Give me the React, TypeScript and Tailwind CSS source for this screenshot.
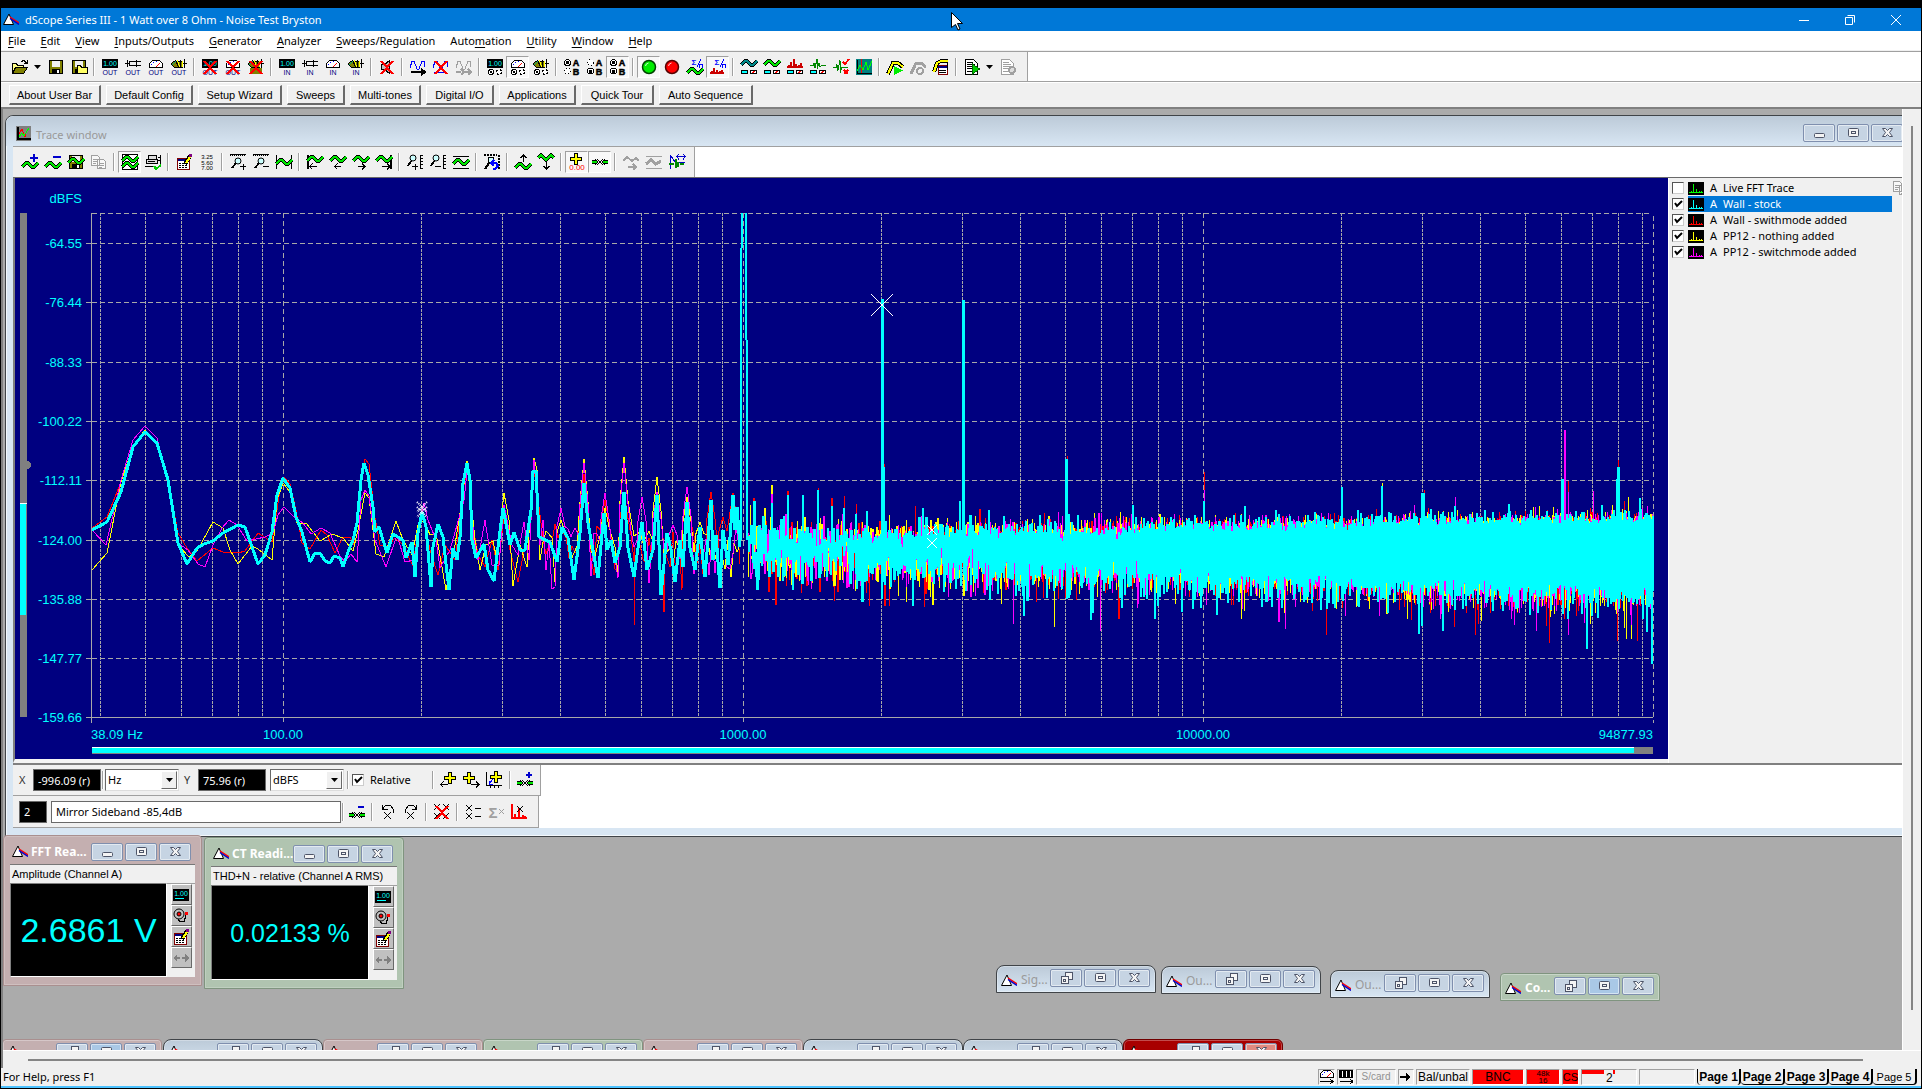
import { useMemo } from "react";
import type { ReactNode } from "react";
import clsx from "clsx";

/* ---------- icons ---------- */

const Svg = ({ children }: { children: ReactNode }) => (
  <svg viewBox="0 0 16 16" className="size-4 shrink-0 overflow-visible" shapeRendering="crispEdges" fill="none" aria-hidden="true">
    {children}
  </svg>
);

const Tiny = ({ x = 8, y, size = 7, fill, children }: { x?: number; y: number; size?: number; fill: string; children: string }) => (
  <text x={x} y={y} fontSize={size} fill={fill} textAnchor="middle" fontFamily="'Liberation Sans', Arial, sans-serif">
    {children}
  </text>
);

const Wave = ({ y = 0, c = "#00e400" }: { y?: number; c?: string }) => {
  const d = `M0 ${y + 10}L4 ${y + 6}L6 ${y + 6}L10 ${y + 10}L12 ${y + 10}L16 ${y + 6}`;
  return (
    <>
      <path d={d} stroke="#000" strokeWidth={3.5} />
      <path d={d} stroke={c} strokeWidth={2} />
    </>
  );
};

const Lcd = () => (
  <>
    <rect width="16" height="9" fill="#000" />
    <Tiny y={7} fill="#0ff">1.00</Tiny>
  </>
);
const Plug = () => <path d="M0 4.500h4M2.500 1v7M4.500 2v5M4.500 2.500h7M4.500 6.500h7M11.500 1v7M12 2.500h4M12 6.500h4" stroke="#000" />;
const Gauge = () => (
  <>
    <path d="M1.500 8.500v-4l3-3h7l3 3v4z" fill="#fff" stroke="#000" />
    <path d="M3 5.500h1M5 3.500h1M8 2.500h1" stroke="#00f" />
    <path d="M8 8l4-4" stroke="#f00" />
  </>
);
const Speaker = () => (
  <>
    <path d="M0 5l3-3h8v6H3z" fill="#808000" stroke="#000" />
    <path d="M4.500 1l3 7M9.500 1v8M13.500 0v9M11 4.500h5" stroke="#000" />
    <path d="M6.500 1l2 7M11.500 2v6" stroke="#ff0" />
    <path d="M1 6l4-4" stroke="#0a7" />
  </>
);
const Cross = () => <path d="M2 2L14 15M14 2L2 15" stroke="#f00" strokeWidth="2" />;
const OutMark = () => <Tiny y={16} fill="#000080">OUT</Tiny>;
const InMark = () => <Tiny y={16} fill="#000080">IN</Tiny>;
const Radios = () => (
  <>
    <circle cx="4" cy="13" r="2.500" fill="#fff" stroke="#000" />
    <rect x="3" y="12" width="2" height="2" fill="#000" />
    <circle cx="12" cy="13" r="2.500" fill="#fff" stroke="#000" strokeDasharray="2 2" />
  </>
);
const Floppy = () => (
  <>
    <rect x="1.500" y="1.500" width="13" height="13" fill="#808000" stroke="#000" />
    <rect x="4" y="2" width="8" height="6" fill="#f0f0f0" />
    <rect x="4" y="10" width="8" height="5" fill="#000" />
    <rect x="9" y="11" width="2" height="3" fill="#fff" />
  </>
);
const Lens = ({ sign }: { sign: string }) => (
  <>
    <path d="M0 1.500h16" stroke="#000" strokeDasharray="1 1" />
    <path d="M0 0.500h16" stroke="#000" />
    <circle cx="8" cy="7" r="3" fill="#cff" stroke="#000" shapeRendering="auto" />
    <path d="M6 9l-4 5" stroke="#000" strokeWidth="2" />
    <path d={sign} stroke="#000" />
  </>
);
const LensY = ({ sign }: { sign: string }) => (
  <>
    <circle cx="6" cy="4" r="3" fill="#cff" stroke="#000" shapeRendering="auto" />
    <path d="M4 7l-3 5" stroke="#000" strokeWidth="2" />
    <path d="M13.500 1v14M13 1.500h3M13 4.500h3M13 7.500h3M13 10.500h3M13 14.500h3" stroke="#000" />
    <path d={sign} stroke="#000" />
  </>
);
const AB = ({ a, b }: { a: boolean; b: boolean }) => (
  <>
    <circle cx="3.500" cy="3.500" r="3" fill="#fff" stroke="#000" strokeDasharray={a ? undefined : "1 2"} />
    <circle cx="3.500" cy="12" r="3" fill="#fff" stroke="#000" strokeDasharray={b ? undefined : "1 2"} />
    {a && <rect x="2" y="2" width="3" height="3" fill="#000" />}
    {b && <rect x="2" y="11" width="3" height="3" fill="#000" />}
    <g fontWeight="bold" stroke="#000" strokeWidth="0.500">
      <Tiny x={12} y={7} size={9} fill="#000">A</Tiny>
      <Tiny x={12} y={16} size={9} fill="#000">B</Tiny>
    </g>
  </>
);
const Bars = ({ c }: { c: string }) => (
  <path d="M0 8h16M2 8V6M4 8V3M7 8V0M9 8V5M12 8V6M14 8V4" stroke={c} strokeWidth="2" />
);
const Meters = () => (
  <>
    <rect x="0.500" y="11.500" width="6" height="3" fill="#0ff" stroke="#000" />
    <rect x="9.500" y="11.500" width="6" height="3" fill="#fff" stroke="#000" />
    <path d="M11 14l3-2" stroke="#f00" />
  </>
);
const Sum = () => (
  <>
    <g fontWeight="bold"><Tiny x={7} y={6} size={8} fill="#00f">Σ</Tiny></g>
    <path d="M14 0l-4 8M12.500 5v4M12 5.500h3M15.500 5v4" stroke="#00f" />
  </>
);
const Pencil = () => (
  <>
    <path d="M9 10l5-8" stroke="#000" strokeWidth="4" />
    <path d="M10 9l4-6" stroke="#ff0" strokeWidth="2" />
    <rect x="13" y="0" width="3" height="3" fill="#800080" />
  </>
);
const Sheet = () => (
  <>
    <rect x="1" y="4" width="12" height="11" fill="#fff" stroke="#800000" />
    <rect x="2" y="5" width="10" height="2" fill="#000080" />
    <path d="M3 9.500h9M3 11.500h9M3 13.500h9" stroke="#000" strokeDasharray="2 1" />
    <Pencil />
  </>
);
const Plus = ({ x = 8, y = 8 }: { x?: number; y?: number }) => (
  <>
    <path d={`M${x} ${y - 6}v12M${x - 6} ${y}h12`} stroke="#000" strokeWidth="4" />
    <path d={`M${x} ${y - 5}v10M${x - 5} ${y}h10`} stroke="#ff0" strokeWidth="2" />
  </>
);
const Ecks = ({ x = 0, y = 0, c = "#000", s = 6 }: { x?: number; y?: number; c?: string; s?: number }) => (
  <path d={`M${x} ${y}l${s} ${s}M${x + s} ${y}l${-s} ${s}`} stroke={c} shapeRendering="auto" />
);
const Marks = () => (
  <>
    <path d="M0 11h5M11 11h5" stroke="#000" strokeWidth="4" />
    <path d="M0 11h5M11 11h5" stroke="#00e400" strokeWidth="2" />
    <path d="M3 8l3 3-3 3M13 8l-3 3 3 3" stroke="#000" />
    <Ecks x={5} y={8} />
  </>
);
const Page = ({ c = "#000" }: { c?: string }) => (
  <>
    <path d="M1.500 0.500h8l4 4v11h-12z" fill="#fff" stroke={c} />
    <path d="M3 3.500h6M3 5.500h8M3 7.500h8M3 9.500h8M3 12.500h6" stroke={c} />
  </>
);

const icons: Record<string, ReactNode> = {
  open: (
    <>
      <path d="M0.500 14V4.500h4l1 2h6v2" fill="#ff8" stroke="#000" />
      <path d="M0.500 14.500l3-6h12l-4 6z" fill="#808000" stroke="#000" />
      <path d="M9 2.500l3-1 3 3M15 1v3h-3" stroke="#000" />
    </>
  ),
  save: <Floppy />,
  saveAs: (
    <>
      <Floppy />
      <path d="M6.500 14.500v-8h3l1 2h6v6z" fill="#ff6" stroke="#000" />
    </>
  ),
  lcdOut: <><Lcd /><OutMark /></>,
  plugOut: <><Plug /><OutMark /></>,
  gaugeOut: <><Gauge /><OutMark /></>,
  speakerOut: <><Speaker /><OutMark /></>,
  lcdOff: <><Lcd /><OutMark /><Cross /></>,
  gaugeOff: <><Gauge /><OutMark /><Cross /></>,
  speakerOff: <><Speaker /><path d="M2 12h12" stroke="#808000" strokeWidth="6" /><Cross /></>,
  lcdIn: <><Lcd /><InMark /></>,
  plugIn: <><Plug /><InMark /></>,
  gaugeIn: <><Gauge /><InMark /></>,
  speakerIn: <><Speaker /><InMark /></>,
  mute: (
    <>
      <path d="M2.500 5.500h3l5-4v13l-5-4h-3z" fill="#c0c0c0" stroke="#000" />
      <Cross />
    </>
  ),
  genRun: (
    <>
      <path d="M0 9l2-7h2l3 8h2l3-8h2l1 6" stroke="#00f" />
      <path d="M1 13h12M11 10l4 3-4 3" stroke="#000" strokeWidth="2" />
    </>
  ),
  genOff: (
    <>
      <path d="M0 9l2-7h2l3 8h2l3-8h2l1 6M1 13h13" stroke="#00f" />
      <Cross />
    </>
  ),
  genNext: (
    <>
      <path d="M0 9l2-7h2l3 8h2l3-8h2l1 6" stroke="#a0a0a0" />
      <path d="M0 13h5M5 10l3 3-3 3M8 13h5M12 10l3 3-3 3" stroke="#a0a0a0" strokeWidth="2" />
    </>
  ),
  lcdCh: <><Lcd /><Radios /></>,
  gaugeCh: <><Gauge /><Radios /></>,
  speakerCh: <><Speaker /><Radios /></>,
  chA: <AB a b={false} />,
  chB: <AB a={false} b />,
  chAB: <AB a b />,
  go: (
    <g shapeRendering="auto">
      <circle cx="8" cy="8" r="6.500" fill="#0e0" stroke="#040" strokeWidth="1.500" />
      <path d="M4.500 7a3.500 3.500 0 0 1 3-3" stroke="#cfc" />
    </g>
  ),
  stop: (
    <g shapeRendering="auto">
      <circle cx="8" cy="8" r="6.500" fill="#f00" stroke="#500" strokeWidth="1.500" />
      <path d="M4.500 7a3.500 3.500 0 0 1 3-3" stroke="#fcc" />
    </g>
  ),
  sumWave: <><Sum /><Wave y={4} /></>,
  sumFft: <><Sum /><path d="M0 14h14M2 14v-2M4 14v-5M7 14v-3M10 14v-2M12 14v-3" stroke="#c00" strokeWidth="2" /></>,
  scopeA: <><Wave y={-4} c="#088" /><Meters /></>,
  scopeB: <><Wave y={-4} /><Meters /></>,
  fftBars: <><Bars c="#c00" /><Meters /></>,
  impulse: <><path d="M0 6.500h3l1-2 1 4 2-8v9l2-5 1 3 2-1h4" stroke="#080" /><Meters /></>,
  limits: (
    <>
      <path d="M0 8.500h3l1-3 1 6 2-10v12l2-5h6" stroke="#080" />
      <path d="M10 3l2 2 4-5M11 11l4 4M15 11l-4 4" stroke="#f00" strokeWidth="2" />
    </>
  ),
  scope: (
    <>
      <rect width="16" height="16" fill="#008080" />
      <path d="M1.500 1v13h14" stroke="#000" />
      <path d="M5.500 0v14" stroke="#f00" />
      <path d="M1 12l3-6 3 5 3-8 2 8 4-9" stroke="#0f0" />
    </>
  ),
  sweep: (
    <>
      <path d="M1 15L6 4h5l5 4" stroke="#000" strokeWidth="4" />
      <path d="M1 15L6 4h5l5 4" stroke="#ff0" strokeWidth="2" />
      <path d="M7 7l9 4.500-9 4.500z" fill="#0e0" />
    </>
  ),
  sweepOff: (
    <>
      <path d="M1 15L6 4h5l5 4" stroke="#a0a0a0" strokeWidth="3" />
      <circle cx="10" cy="12" r="3" stroke="#a0a0a0" strokeWidth="2" />
    </>
  ),
  sweepEdit: (
    <>
      <path d="M1 13L4 4l4-2h7" stroke="#000" strokeWidth="4" />
      <path d="M1 13L4 4l4-2h7" stroke="#ff0" strokeWidth="2" />
      <rect x="5" y="6" width="9" height="9" fill="#fff" stroke="#800000" />
      <path d="M5 8h9" stroke="#000080" strokeWidth="2" />
      <path d="M6 11.500h7M6 13.500h7M14.500 3v8" stroke="#000" />
    </>
  ),
  script: <><Page /><path d="M8.500 5l7 5-7 5z" fill="#0c0" stroke="#060" /></>,
  scriptOff: <><Page c="#a0a0a0" /><circle cx="12" cy="11" r="3" fill="#ddd" stroke="#a0a0a0" strokeWidth="2" /></>,
  addTrace: <><Wave y={3} /><path d="M12 0v8M8 4h8" stroke="#00c" strokeWidth="2" /></>,
  delTrace: <><Wave y={3} /><path d="M8 3h8" stroke="#00c" strokeWidth="2" /></>,
  saveTrace: <><Floppy /><Wave y={-1} /></>,
  copy: (
    <g stroke="#a0a0a0" fill="#f8f8f8">
      <path d="M0.500 1.500h6l2 2v8h-8zM6.500 5.500h6l2 2v7h-8z" />
      <path d="M2 5.500h4M2 7.500h4M2 9.500h3M8 9.500h5M8 11.500h5M8 13.500h3" />
    </g>
  ),
  view: <><rect x="0.500" y="0.500" width="15" height="15" fill="#fff" stroke="#000" /><Wave y={-3} /><Wave y={3} /></>,
  print: (
    <>
      <path d="M3.500 1.500h8v4h-8zM1.500 5.500h11v4h-11z" fill="#ddd" stroke="#000" />
      <path d="M0 12.500h9M15.500 1v10M3 7.500h7M13 3.500h3M13 6.500h3" stroke="#000" />
      <path d="M9 12l2 3 5-4" stroke="#0c0" strokeWidth="2" />
    </>
  ),
  sheet: <Sheet />,
  values: (
    <>
      <Tiny y={5} size={6} fill="#000">3.25</Tiny>
      <Tiny y={11} size={6} fill="#000">5.60</Tiny>
      <Tiny y={16} size={6} fill="#000">7.00</Tiny>
    </>
  ),
  zoomInX: <Lens sign="M10 12.500h6M13.500 10v6" />,
  zoomOutX: <Lens sign="M10 12.500h6" />,
  fitX: <><path d="M0.500 1v14M15.500 1v14" stroke="#000" /><Wave /></>,
  first: <><path d="M1 1v14" stroke="#000" strokeWidth="2" /><Wave y={-3} /><path d="M2 12.500h8M5.500 9.500l-3 3 3 3" stroke="#000" /></>,
  prev: <><Wave y={-3} /><path d="M4 12.500h7M7.500 9.500l-3 3 3 3" stroke="#000" /></>,
  next: <><Wave y={-3} /><path d="M5 12.500h7M9 9.500l3 3-3 3" stroke="#000" /></>,
  last: <><path d="M15 1v14" stroke="#000" strokeWidth="2" /><Wave y={-3} /><path d="M6 12.500h8M11 9.500l3 3-3 3" stroke="#000" /></>,
  zoomInY: <LensY sign="M5 12.500h6M8.500 10v6" />,
  zoomOutY: <LensY sign="M5 12.500h6" />,
  fitY: <><path d="M0 2.500h16M0 14.500h16" stroke="#000" /><Wave /></>,
  unzoom: (
    <>
      <path d="M0 1h13M15 1v14" stroke="#000" strokeWidth="2" strokeDasharray="2 1" />
      <circle cx="7" cy="6" r="3" fill="#cff" stroke="#000" />
      <path d="M5 9l-4 6" stroke="#000" strokeWidth="2" />
      <path d="M8 9h4l2 3-3 3H9M10 6L7 9l3 3" stroke="#00f" strokeWidth="2" />
    </>
  ),
  up: <><Wave y={4} /><path d="M8.500 8V1M5.500 4l3-3 3 3" stroke="#000" /></>,
  down: (
    <>
      <path d="M0 4l3-3 5 5 5-5 3 3" stroke="#000" strokeWidth="3.500" />
      <path d="M0 4l3-3 5 5 5-5 3 3" stroke="#00e400" strokeWidth="2" />
      <path d="M8.500 8v7M5.500 12l3 3 3-3" stroke="#000" />
    </>
  ),
  cursor: (
    <>
      <Plus x={7} y={5} />
      <Tiny y={16} size={8} fill="#f00">0.00</Tiny>
    </>
  ),
  marks: <g transform="translate(0 -3)"><Marks /></g>,
  shiftOff: <path d="M0 7l4-4 5 4 4-3 3 3M5 13h8M10 10l3 3-3 3" stroke="#a0a0a0" strokeWidth="2" />,
  scaleOff: (
    <g stroke="#a0a0a0">
      <path d="M0 2.500h16M0 14.500h16" />
      <path d="M0 10l5-4 5 4 5-3" strokeWidth="3" />
    </g>
  ),
  align: (
    <>
      <path d="M1.500 15V1.500l5 7h9M8 2.500h8M10 0L8 2.500l2 3M14 0l2 2.500-2 3" stroke="#00c" />
      <path d="M0 10h5M7 5v9M9 8v5M11 10h4" stroke="#080" strokeWidth="2" />
    </>
  ),
  curLeft: <><Plus x={10} y={6} /><path d="M0 12.500h8M3.500 9.500l-3 3 3 3" stroke="#000" /></>,
  curRight: <><Plus x={6} y={6} /><path d="M8 12.500h8M13 9.500l3 3-3 3" stroke="#000" /></>,
  curPeak: (
    <>
      <path d="M0.500 0v13.500h15M4.500 14v2M8.500 14v2M12.500 14v2" stroke="#000" />
      <Plus x={10} y={5} />
      <path d="M7 7l-4 5M3.500 9v3h3" stroke="#00f" />
    </>
  ),
  addMark: <><Marks /><path d="M12 0v6M9 3h6" stroke="#00c" strokeWidth="2" /></>,
  delMark: <><Marks /><path d="M9 3h6" stroke="#00c" strokeWidth="2" /></>,
  markPrev: <><path d="M2.500 1v4h5M2.500 5l3-3.500h5l3 4v3" stroke="#000" /><Ecks x={4} y={8} s={7} /></>,
  markNext: <><path d="M13.500 1v4h-5M13.500 5l-3-3.500h-5l-3 4v3" stroke="#000" /><Ecks x={4} y={8} s={7} /></>,
  markClear: (
    <>
      <Ecks x={0} y={0} /><Ecks x={9} y={0} /><Ecks x={0} y={9} /><Ecks x={9} y={9} />
      <Cross />
    </>
  ),
  markList: <><Ecks x={1} y={1} /><Ecks x={1} y={9} /><path d="M10 4.500h6M10 12.500h6" stroke="#000" /></>,
  markSum: (
    <>
      <g fontWeight="bold"><Tiny x={5} y={14} size={15} fill="#a0a0a0">Σ</Tiny></g>
      <Ecks x={11} y={5} s={5} c="#a0a0a0" />
    </>
  ),
  markFft: <><path d="M1 0v14h15M4 14v-4M8 14V4M12 14v-3M14 14v-2" stroke="#f00" strokeWidth="2" /><Ecks x={6} y={2} /></>,
  lcdTool: (
    <>
      <rect width="16" height="12" y="2" fill="#000" />
      <Tiny y={9} fill="#0ff">1.00</Tiny>
      <path d="M2 11.500h9" stroke="#0ff" />
    </>
  ),
  bell: (
    <>
      <circle cx="6" cy="6" r="5" fill="#c0c0c0" stroke="#000" shapeRendering="auto" />
      <circle cx="6" cy="6" r="2" fill="#f00" stroke="#000" shapeRendering="auto" />
      <path d="M5 11.500l2 2h4l2-6" stroke="#000" />
      <rect x="12" y="4" width="3" height="3" fill="#f00" />
    </>
  ),
  arrows: <path d="M0 8l4-4v3h3v2H4v3zM16 8l-4-4v3H9v2h3v3z" fill="#808080" />,
  statGauge: <><Gauge /><path d="M1 12.500h13M11 10l3 2.500-3 2.500" stroke="#000" /></>,
  statBars: (
    <>
      <rect x="1" y="1" width="14" height="8" fill="#000" />
      <path d="M4.500 2v6M8.500 2v6M12.500 2v6" stroke="#fff" />
      <path d="M2 12.500h13M12 10l3 2.500-3 2.500" stroke="#000" />
    </>
  ),
  statArrow: <path d="M2 7h6V4l5 4-5 4V9H2z" fill="#000" />,
};

const Icon = ({ name }: { name: string }) => <Svg>{icons[name]}</Svg>;

const AppIcon = () => (
  <svg viewBox="0 0 16 13" className="h-[13px] w-4 shrink-0" aria-hidden="true">
    <path d="M0.500 11.500L6 1l4.500 10.500z" fill="#fff" stroke="#000" />
    <path d="M7 4l9 6" stroke="#f00" strokeWidth="1.500" />
    <path d="M7 5.500l9 6" stroke="#00c" strokeWidth="1.500" />
  </svg>
);

const Pointer = () => (
  <svg viewBox="0 0 13 19" className="pointer-events-none absolute top-3 left-[950px] h-[19px] w-[13px]" aria-hidden="true">
    <path d="M0.500 0.500v15l4-3 2.500 5.500 2-1-2.500-5.500h5z" fill="#fff" stroke="#000" />
  </svg>
);

/* ---------- toolbars ---------- */

// "|" is a separator, "v" a drop-down arrow, a leading "*" a pressed button
const mainTools =
  "open v save saveAs | lcdOut plugOut gaugeOut speakerOut | lcdOff gaugeOff speakerOff | lcdIn plugIn gaugeIn speakerIn | mute | genRun genOff genNext | lcdCh *gaugeCh speakerCh | chA chB *chAB | *go stop sumWave *sumFft | scopeA scopeB fftBars impulse limits scope | sweep sweepOff sweepEdit | script v scriptOff";
const traceTools =
  "addTrace delTrace saveTrace copy | *view print | sheet values | zoomInX zoomOutX fitX | first prev next last | zoomInY zoomOutY fitY | unzoom | up down | *cursor *marks | shiftOff scaleOff align";

const Separator = ({ tight = false }: { tight?: boolean }) => (
  <span className={clsx("h-[18px] w-0.5 shrink-0 border-l border-[#a0a0a0] border-r border-r-white", tight ? "mx-px" : "mx-[3px]")} />
);

const Caret = () => (
  <svg viewBox="0 0 7 4" className="h-1 w-[7px]" aria-hidden="true">
    <path d="M0 0h7L3.500 4z" />
  </svg>
);

const Tools = ({ list }: { list: string }) => (
  <>
    {list.split(" ").map((item, i) => {
      if (item === "|") return <Separator key={i} />;
      if (item === "v")
        return (
          <button key={i} aria-label="More" className="flex w-[13px] justify-center">
            <Caret />
          </button>
        );
      const on = item.startsWith("*");
      const name = item.replace("*", "");
      return (
        <button
          key={i}
          aria-label={name}
          className={clsx(
            "flex h-[22px] w-[23px] shrink-0 items-center justify-center border",
            on ? "border-[#a0a0a0] border-r-white border-b-white bg-[#f8f8f8]" : "border-transparent"
          )}
        >
          <Icon name={name} />
        </button>
      );
    })}
  </>
);

const menus = ["&File", "&Edit", "&View", "&Inputs/Outputs", "&Generator", "&Analyzer", "&Sweeps/Regulation", "Auto&mation", "&Utility", "&Window", "&Help"];

const userBar = [
  ["About User Bar", "w-[92px]"],
  ["Default Config", "w-[87px]"],
  ["Setup Wizard", "w-[84px]"],
  ["Sweeps", "w-[58px]"],
  ["Multi-tones", "w-[71px]"],
  ["Digital I/O", "w-[68px]"],
  ["Applications", "w-[77px]"],
  ["Quick Tour", "w-[73px]"],
  ["Auto Sequence", "w-[94px]"],
];

/* ---------- window furniture ---------- */

type Tone = "blue" | "rose" | "green" | "red";

const tones: Record<Tone, string> = {
  blue: "rounded-t-lg border-[#404448] bg-linear-to-b from-[#bccad8] to-[#d8e6f3]",
  rose: "rounded-t-sm border-[#a98f8f] bg-[#c4afb0]",
  green: "rounded-t-sm border-[#7f947f] bg-[#b0c4b0]",
  red: "rounded-t-md border-[#700000] bg-[#a80000]",
};

const glyphs: Record<string, ReactNode> = {
  Minimize: <rect x="3.500" y="7.500" width="10" height="4" rx="1" />,
  Maximize: (
    <>
      <rect x="3.500" y="2.500" width="10" height="8" rx="1" />
      <rect x="6.500" y="5.500" width="4" height="2" />
    </>
  ),
  Restore: (
    <>
      <rect x="7.500" y="1.500" width="7" height="7" />
      <rect x="3.500" y="5.500" width="7" height="7" />
      <rect x="5.500" y="8.500" width="2" height="2" />
    </>
  ),
  Close: <path d="M3.500 2.500h3l2 2 2-2h3l-3 4 3 4h-3l-2-2-2 2h-3l3-4z" />,
};

const CaptionButtons = ({ first = "Minimize", hot }: { first?: string; hot?: "Maximize" | "Close" }) => (
  <div className="flex shrink-0 gap-0.5">
    {[first, "Maximize", "Close"].map((name) => (
      <button
        key={name}
        aria-label={name}
        className={clsx(
          "flex h-[18px] w-8 items-center justify-center rounded-xs border border-[#7f8fae] inset-ring inset-ring-white/50",
          hot !== name && "bg-[#c6d4e3]",
          hot === name && name === "Maximize" && "bg-[#a9c8e6]",
          hot === name && name === "Close" && "bg-[#e08a80]"
        )}
      >
        <svg viewBox="0 0 17 14" className="h-[14px] w-[17px]" fill="#f4f4f4" stroke="#4d5468" aria-hidden="true">
          {glyphs[name]}
        </svg>
      </button>
    ))}
  </div>
);

const MiniWindow = ({ title, tone, place, hot }: { title?: string; tone: Tone; place: string; hot?: "Maximize" | "Close" }) => (
  <div className={clsx("absolute flex h-7 w-40 items-start gap-1 border pt-[3px] pl-1 inset-ring inset-ring-white/30", tones[tone], place)}>
    <div className="flex min-w-0 flex-1 items-center gap-1 pt-0.5">
      <AppIcon />
      {title && (
        <span className={clsx("text-[12px] leading-[18px] whitespace-nowrap", tone === "blue" ? "text-[#9a9a9a]" : "font-bold text-white")}>{title}</span>
      )}
    </div>
    <div className="pr-[5px]">
      <CaptionButtons first="Restore" hot={hot} />
    </div>
  </div>
);

const Reading = ({ title, tone, label, value, size, place }: { title: string; tone: Tone; label: string; value: string; size: string; place: string }) => (
  <section className={clsx("absolute flex flex-col border px-1.5 pb-2 inset-ring inset-ring-white/20", tones[tone], place)}>
    <header className="flex h-7 items-center gap-[3px] pt-[3px] pr-1 pl-0.5">
      <AppIcon />
      <h2 className="min-w-0 flex-1 text-[12px] font-bold whitespace-nowrap text-white">{title}</h2>
      <CaptionButtons />
    </header>
    <div className="flex min-h-0 flex-1 flex-col border-t border-[#777] bg-[#f0f0f0]">
      <p className="h-[18px] pl-0.5 font-['Liberation_Sans',sans-serif] text-[11px] leading-[18px] whitespace-nowrap">{label}</p>
      <div className="flex min-h-0 flex-1">
        <output className={clsx("flex flex-1 items-center justify-center border border-[#808080] border-r-white border-b-white bg-black font-['Liberation_Sans',sans-serif] text-[#0ff]", size)}>
          {value}
        </output>
        <div className="flex w-7 flex-col items-center border-t border-[#a0a0a0]">
          {["lcdTool", "bell", "sheet", "arrows"].map((name) => (
            <button key={name} aria-label={name} className="flex h-[21px] w-[21px] items-center justify-center border border-white border-r-[#696969] border-b-[#696969] bg-[#c0c0c0]">
              <Icon name={name} />
            </button>
          ))}
        </div>
      </div>
    </div>
  </section>
);

const CheckBox = ({ checked, label, children }: { checked: boolean; label: string; children?: ReactNode }) => (
  <label className="flex shrink-0 items-center gap-1.5">
    <span className="grid size-3">
      <input type="checkbox" defaultChecked={checked} aria-label={label} className="peer col-start-1 row-start-1 size-3 appearance-none border border-[#555] border-r-[#ccc] border-b-[#ccc] bg-white" />
      <svg viewBox="0 0 12 12" className="pointer-events-none col-start-1 row-start-1 hidden size-3 peer-checked:block" fill="none">
        <path d="M3 5l2 3 5-5" stroke="#000" strokeWidth="2" />
      </svg>
    </span>
    {children}
  </label>
);

const Combo = ({ label, value }: { label: string; value: string }) => (
  <span className="grid h-[22px] w-[74px] shrink-0 items-stretch border border-[#696969] border-r-[#ddd] border-b-[#ddd] bg-white">
    <select aria-label={label} className="col-start-1 row-start-1 appearance-none bg-transparent pl-0.5">
      <option>{value}</option>
    </select>
    <span className="pointer-events-none col-start-1 row-start-1 m-px flex w-4 items-center justify-center justify-self-end border border-white border-r-[#696969] border-b-[#696969] bg-[#f0f0f0]">
      <Caret />
    </span>
  </span>
);

/* ---------- spectrum ---------- */

type Colour = "red" | "yellow" | "magenta" | "cyan";
type Point = [number, number];

const colours: Record<Colour, string> = { red: "#ff0000", yellow: "#ffff00", magenta: "#ff00ff", cyan: "#00ffff" };

// measured bins below 1 kHz
const low: Record<Colour, string> = {
  cyan: "92,530 107,522 121,492 133,447 145,432 157,443 168,480 178,543 187,564 197,548 204,544 213,541 223,533 238,525 245,527 258,564 265,555 272,532 277,495 283,478 290,488 296,517 302,532 310,562 315,553 320,553 325,561 330,563 334,556 340,558 343,567 348,552 353,540 357,523 361,480 364,463 368,475 373,507 375,532 379,527 387,553 393,534 403,540 406,558 412,542 415,577 418,533 422,512 426,527 431,587 433,547 438,524 443,537 449,590 453,548 457,560 460,537 463,483 467,463 470,480 472,540 476,558 484,544 488,570 494,581 498,547 503,508 510,545 514,532 520,550 525,550 531,510 533,471 536,471 539,537 550,542 557,562 562,527 568,538 574,580 580,533 584,483 588,523 598,578 604,513 607,550 611,540 615,563 620,547 624,492 628,548 634,577 638,548 642,522 647,570 653,550 657,495 661,595 667,533 671,550 675,582 680,540 683,567 687,502 690,548 695,570 700,527 703,560 705,577 708,540 711,500 713,560 716,535 720,588 723,530 728,565 733,495 735,530 737,507 740,547",
  red: "92,528 107,517 121,482 133,448 145,430 157,444 168,480 178,533 187,548 197,561 213,548 223,552 238,553 245,551 258,533 272,542 280,490 284,477 290,484 296,510 302,543 310,549 321,530 327,535 335,553 343,537 350,537 354,545 359,500 365,459 369,464 375,518 380,545 387,547 395,538 403,545 413,566 418,530 423,518 430,550 438,575 445,545 455,560 463,490 468,464 472,520 478,555 485,567 492,540 498,570 504,515 510,550 518,582 524,550 530,520 534,469 540,515",
  yellow: "92,570 107,553 121,482 133,446 145,430 157,443 168,480 178,545 189,557 197,551 213,522 223,528 230,550 238,564 252,546 258,549 272,560 277,500 283,483 290,492 297,523 306,523 320,541 332,534 343,538 353,551 358,530 365,493 369,498 376,554 384,557 396,521 403,540 412,555 418,525 424,520 430,535 436,533 446,590 455,545 462,500 467,461 475,540 480,570 486,545 493,541 497,560 504,493 509,520 513,586 520,545 527,567 531,500 534,458 537,470 540,560",
  magenta: "92,530 106,545 121,480 133,440 145,426 157,438 168,482 178,543 188,550 198,564 205,567 213,545 222,528 229,520 237,525 247,541 265,537 273,533 278,515 284,507 295,518 303,523 311,534 321,528 330,533 340,556 345,562 351,554 357,562 361,500 365,490 369,496 375,540 386,567 397,535 405,562 414,560 420,520 424,503 428,520 436,540 440,568 450,550 457,525 464,500 468,463 474,540 478,560 485,520 492,565 499,565 504,505 512,545 518,555 524,522 529,560 534,460 540,545",
};

// mains harmonics between 400 and 950 Hz
const humps: Record<Exclude<Colour, "cyan">, Point[]> = {
  red: [[562, 530], [584, 474], [605, 500], [624, 492], [657, 492], [687, 499], [711, 492], [723, 517], [733, 493]],
  yellow: [[561, 520], [584, 459], [605, 508], [624, 457], [657, 477], [687, 497], [700, 522]],
  magenta: [[561, 508], [575, 528], [584, 463], [605, 493], [624, 463], [642, 497], [657, 492], [673, 525], [687, 487]],
};

// [x, y, width]: narrow lines that stand out of the noise, up or down
const lines: Record<Colour, [number, number, number][]> = {
  red: [[634, 625, 1], [664, 612, 2], [754, 498, 2], [776, 605, 2], [788, 491, 2], [818, 488, 1], [820, 592, 2], [832, 498, 2], [844, 496, 1], [856, 504, 1], [884, 464, 2], [915, 506, 1], [980, 509, 2], [1067, 456, 1], [1119, 619, 2], [1204, 472, 1], [1326, 635, 1], [1424, 490, 1], [1549, 643, 1], [1568, 481, 1], [1617, 641, 1], [1618, 460, 1], [1624, 501, 1]],
  yellow: [[750, 505, 1], [772, 485, 2], [933, 605, 2], [1054, 627, 1], [1160, 514, 2], [1241, 619, 1], [1382, 483, 1], [1628, 497, 1], [1631, 639, 1]],
  magenta: [[772, 494, 2], [882, 498, 2], [1013, 624, 1], [1204, 490, 1], [1279, 622, 2], [1455, 497, 1], [1536, 631, 1], [1565, 430, 2], [1568, 492, 1], [1593, 491, 1]],
  cyan: [[754, 501, 3], [772, 503, 2], [788, 495, 2], [803, 495, 2], [818, 490, 2], [832, 506, 2], [844, 508, 2], [856, 514, 2], [867, 511, 2], [882, 299, 3], [884, 467, 2], [923, 508, 2], [960, 501, 2], [963, 300, 3], [990, 600, 2], [1024, 616, 2], [1066, 459, 3], [1133, 505, 2], [1155, 619, 2], [1204, 501, 2], [1245, 506, 2], [1276, 510, 2], [1342, 487, 2], [1382, 486, 2], [1419, 634, 2], [1423, 493, 4], [1443, 631, 2], [1455, 506, 2], [1509, 504, 2], [1562, 479, 3], [1618, 467, 3], [1618, 479, 4], [1640, 498, 2], [1652, 664, 2]],
};

const random = (seed: number) => () => {
  seed = (seed * 1664525 + 1013904223) % 4294967296;
  return (seed + 0.5) / 4294967296;
};

const FLOOR = 545;
const level = (rnd: () => number) => {
  const power = -(Math.log(rnd()) + Math.log(rnd())) / 2;
  const y = FLOOR - 47 * Math.log10(power);
  const soft = FLOOR + 28;
  return y > soft ? soft + (y - soft) * 0.7 : y;
};

function lowTrace(colour: Colour, seed: number) {
  const rnd = random(seed);
  let d = "M" + low[colour].replaceAll(" ", "L");
  if (colour === "cyan") return d;
  for (let x = 543; x < 741; x += 3) {
    const hump = humps[colour].find(([hx]) => Math.abs(hx - x) < 5);
    if (hump) {
      d += `L${hump[0] - 4},${(hump[1] + FLOOR) / 2}L${hump[0]},${hump[1]}L${hump[0] + 4},${(hump[1] + FLOOR) / 2}`;
      x = hump[0] + 4;
    } else d += `L${x},${Math.round(level(rnd))}`;
  }
  return d;
}

function highTrace(seed: number) {
  const rnd = random(seed);
  let d = "";
  let last = level(rnd);
  for (let x = 748; x < 1653; x++) {
    const bins = Math.round(1.4 * Math.pow(10, (x - 743) / 460));
    let top = last;
    let bottom = last;
    for (let i = 0; i < bins; i++) {
      last = level(rnd);
      top = Math.min(top, last);
      bottom = Math.max(bottom, last);
    }
    d += `M${x}.5,${Math.round(top)}V${Math.round(bottom) + 1}`;
  }
  return d;
}

const xOf = (hz: number) => Math.round(283 + 460 * Math.log10(hz / 100)) + 0.5;
const minor = [10, 100, 1000, 10000]
  .flatMap((decade) => [2, 3, 4, 5, 6, 7, 8, 9].map((n) => n * decade))
  .filter((hz) => hz >= 40);
const levels: [string, number][] = [
  ["-64.55", 243], ["-76.44", 302], ["-88.33", 362], ["-100.22", 421], ["-112.11", 480],
  ["-124.00", 540], ["-135.88", 599], ["-147.77", 658], ["-159.66", 717],
];
const order: Colour[] = ["red", "yellow", "magenta", "cyan"];

const Spectrum = () => {
  const traces = useMemo(() => order.map((c, i) => ({ low: lowTrace(c, 77 + i * 991), high: highTrace(5 + i * 1237) })), []);
  return (
    <svg viewBox="15 178 1653 581" className="block w-full bg-[#000080]" role="img" aria-label="FFT spectrum">
      <g shapeRendering="crispEdges" fill="none" stroke="#a8a8a8">
        {minor.map((hz) => <path key={hz} d={`M${xOf(hz)} 213V717`} strokeDasharray="3 1" />)}
        {[100, 1000, 10000].map((hz) => <path key={hz} d={`M${xOf(hz)} 213V723`} strokeDasharray="5 3" />)}
        <path d="M1653.500 216V723" strokeDasharray="5 3" />
        <path d="M92 213.500H1650" strokeDasharray="5 3" />
        {levels.slice(0, -1).map(([t, y]) => <path key={t} d={`M92 ${y}.5H1650`} strokeDasharray="5 3" />)}
        {levels.map(([t, y]) => <path key={t} d={`M86 ${y}.5H92`} />)}
        <path d="M91.500 213V723M92 717.500H1653" />
      </g>
      <g fill="none" shapeRendering="crispEdges" strokeLinejoin="bevel">
        {order.map((c, i) => (
          <g key={c} stroke={colours[c]}>
            <path d={traces[i].low} strokeWidth={c === "cyan" ? 3 : 1} />
            <path d={traces[i].high} strokeWidth={c === "cyan" ? 2 : 1} />
            {lines[c].map(([x, y, w]) => <path key={`${x}-${y}`} d={`M${x} 545V${y}`} strokeWidth={w} />)}
          </g>
        ))}
        <path d="M742 213V248M746 213V340M741 248V540M747 340V540" stroke="#0ff" strokeWidth="2" />
      </g>
      <g stroke="#fff">
        <path d="M871 294L893 316M893 294L871 316M927 525L937 535M937 525L927 535M927 538L937 548M937 538L927 548" />
        <path d="M417 502L427 512M427 502L417 512M417 507L427 517M427 507L417 517" strokeWidth="2" strokeDasharray="1 1" />
      </g>
      <g shapeRendering="crispEdges">
        <rect x="20" y="213" width="7" height="504" fill="#808080" />
        <circle cx="27" cy="465" r="4" fill="#808080" />
        <rect x="20" y="503" width="6" height="112" fill="#0ff" />
        <path d="M20 503.500H27" stroke="#fff" />
        <rect x="92" y="747" width="1561" height="7" fill="#808080" />
        <rect x="92" y="747" width="1542" height="6" fill="#0ff" />
        <path d="M92 747.500H1634" stroke="#fff" />
      </g>
      <g fill="#0ff" fontSize="13" fontFamily="'Liberation Sans', Arial, sans-serif">
        <text x="82" y="203" textAnchor="end">dBFS</text>
        {levels.map(([t, y]) => <text key={t} x="82" y={y + 5} textAnchor="end">{t}</text>)}
        <text x="91" y="739">38.09 Hz</text>
        <text x="283" y="739" textAnchor="middle">100.00</text>
        <text x="743" y="739" textAnchor="middle">1000.00</text>
        <text x="1203" y="739" textAnchor="middle">10000.00</text>
        <text x="1653" y="739" textAnchor="end">94877.93</text>
      </g>
    </svg>
  );
};

const legend: [string, string, boolean][] = [
  ["Live FFT Trace", "#00ff00", false],
  ["Wall - stock", "#00ffff", true],
  ["Wall - swithmode added", "#ff0000", true],
  ["PP12 - nothing added", "#ffff00", true],
  ["PP12 - switchmode added", "#ff00ff", true],
];

const Legend = () => (
  <aside className="w-[237px] shrink-0 border-l border-white bg-[#f0f0f0] pt-0.5 pl-[3px]">
    <ul>
      {legend.map(([name, colour, on], i) => (
        <li key={name} className="flex h-4 items-center">
          <CheckBox checked={on} label={name} />
          <div className={clsx("ml-1 flex h-4 w-[204px] shrink-0 items-center", i === 1 && "bg-[#0078d7] text-white")}>
            <svg viewBox="0 0 16 13" className="h-[13px] w-4" shapeRendering="crispEdges" aria-hidden="true">
              <rect width="16" height="13" fill="#000" />
              <path d="M1 10.500h14M5.500 2v9M8.500 7v4M3.500 9v2M11.500 9v2M13.500 9v2" stroke={colour} />
            </svg>
            <span className="ml-1.5 w-[13px]">A</span>
            <span>{name}</span>
          </div>
          {i === 0 && <button aria-label="Copy traces" className="ml-px"><Icon name="copy" /></button>}
        </li>
      ))}
    </ul>
  </aside>
);

const TraceWindow = () => (
  <section className="absolute top-1.5 -right-[11px] left-0.5 flex flex-col rounded-t-lg border border-[#404448] bg-[#d8e6f3] px-[7px] pb-2 inset-ring inset-ring-white/70">
    <header className="-mx-[7px] flex h-[30px] items-center gap-[5px] rounded-t-lg bg-linear-to-b from-[#bccad8] to-[#d8e6f3] pt-1 pr-[9px] pl-[10px]">
      <svg viewBox="0 0 15 15" className="size-[15px]" shapeRendering="crispEdges" fill="none" aria-hidden="true">
        <rect width="15" height="15" fill="#808080" />
        <path d="M2 1v12h13" stroke="#000" strokeWidth="2" />
        <path d="M3 8l3-5 3 8 1-4" stroke="#f00" />
        <path d="M3 11l3-4 2 3 5-8" stroke="#0f0" />
      </svg>
      <h1 className="flex-1 pt-1 text-[11px] text-[#999]">Trace window</h1>
      <CaptionButtons />
    </header>
    <div className="flex h-[31px] border-t border-[#a0a0a0] bg-white">
      <div className="flex items-center border-r border-[#a0a0a0] bg-[#f0f0f0] pr-1.5 pl-[5px]">
        <Tools list={traceTools} />
      </div>
    </div>
    <div className="flex border-t border-[#696969] bg-[#f0f0f0]">
      <div className="min-w-0 flex-1 border-b-4 border-l-2 border-l-[#808080] border-b-[#f4f4f4]">
        <Spectrum />
      </div>
      <Legend />
    </div>
    <div className="border-t-2 border-[#808080] bg-white">
      <div className="flex h-[31px] w-[528px] items-center border-r border-b border-[#a0a0a0] bg-[#f0f0f0] pl-1.5">
        <label htmlFor="cursor-x" className="w-[14px] text-[#333]">X</label>
        <input id="cursor-x" defaultValue="-996.09 (r)" className="h-[22px] w-[68px] border border-[#696969] bg-black pl-1 text-white" />
        <Separator tight />
        <Combo label="X unit" value="Hz" />
        <label htmlFor="cursor-y" className="ml-[5px] w-[14px] text-[#333]">Y</label>
        <input id="cursor-y" defaultValue="75.96 (r)" className="h-[22px] w-[68px] border border-[#696969] bg-black pl-1 text-white" />
        <span className="w-1" />
        <Combo label="Y unit" value="dBFS" />
        <Separator />
        <CheckBox checked label="Relative">Relative</CheckBox>
        <span className="w-[18px]" />
        <Separator />
        <Tools list="curLeft curRight curPeak | addMark" />
      </div>
      <div className="flex h-8 w-[526px] items-center border-r border-b border-[#a0a0a0] bg-[#f0f0f0] pl-1.5">
        <input aria-label="Mark number" defaultValue="2" className="h-[22px] w-7 border border-[#696969] bg-black pl-1 text-white" />
        <input aria-label="Mark name" defaultValue="Mirror Sideband -85,4dB" className="ml-1 h-[22px] w-[290px] border border-[#696969] bg-white pl-1" />
        <Separator tight />
        <Tools list="delMark | markPrev markNext | markClear | markList markSum markFft" />
      </div>
    </div>
  </section>
);

/* ---------- status bar ---------- */

const cell = "flex h-4 shrink-0 items-center justify-center overflow-hidden border border-[#a0a0a0] border-r-white border-b-white";

const StatusBar = () => (
  <footer className="flex h-[18px] shrink-0 items-center bg-[#f0f0f0] pl-0.5">
    <p className="flex-1">For Help, press F1</p>
    <div className="flex gap-0.5 pr-1 font-['Liberation_Sans',sans-serif] text-[12px]">
      <span className={clsx(cell, "w-[17px]")}><Icon name="statGauge" /></span>
      <span className={clsx(cell, "w-[17px]")}><Icon name="statBars" /></span>
      <span className={clsx(cell, "w-10 text-[10px] text-[#909090]")}>S/card</span>
      <span className={clsx(cell, "w-4")}><Icon name="statArrow" /></span>
      <span className={clsx(cell, "w-[54px]")}>Bal/unbal</span>
      <span className={clsx(cell, "w-[52px] bg-[#f00]")}>BNC</span>
      <span className={clsx(cell, "w-[34px] flex-col bg-[#f00] text-[8px] leading-[7px]")}>
        <span>48k</span>
        <span>16</span>
      </span>
      <span className={clsx(cell, "w-[17px] bg-[#f00] text-[11px]")}>CS</span>
      <span className={clsx(cell, "w-14 items-start justify-start")}>
        <span className="h-1 w-[22px] bg-[#f00]" />
        <span className="mt-px ml-0.5 leading-[14px]">2</span>
        <span className="h-1 w-0.5 bg-[#f00]" />
      </span>
      <span className={clsx(cell, "w-14")} />
      <nav className="flex">
        {[1, 2, 3, 4, 5].map((n) => (
          <button
            key={n}
            className={clsx(
              "h-4 w-11 rounded-b-sm border-r-2 border-b border-black leading-[14px]",
              n === 1 && "border-b-0 border-l",
              n < 5 ? "font-bold" : "text-[11px]"
            )}
          >
            Page {n}
          </button>
        ))}
      </nav>
    </div>
  </footer>
);

/* ---------- page ---------- */

export default function App() {
  return (
    <div className="relative flex h-screen flex-col overflow-hidden border-x border-t-8 border-b border-black bg-[#f0f0f0] font-['Noto_Sans',sans-serif] text-[11px] leading-4 text-black">
      <header className="flex h-[23px] shrink-0 items-center bg-[#0078d7] pl-0.5 text-white">
        <AppIcon />
        <span className="ml-1.5 flex-1">dScope Series III - 1 Watt over 8 Ohm - Noise Test Bryston</span>
        <div className="flex pr-0.5">
          {["M0 5.500h10", "M0.500 2.500h7v7h-7zM2.500 0.500h7v7", "M0 0l10 10M10 0L0 10"].map((d, i) => (
            <button key={d} aria-label={["Minimize", "Restore", "Close"][i]} className="flex w-[46px] justify-center">
              <svg viewBox="0 0 10 10" className="size-2.5" fill="none" stroke="#fff"><path d={d} /></svg>
            </button>
          ))}
        </div>
      </header>
      <nav className="flex h-5 shrink-0 items-center gap-[15px] border-b border-[#f0f0f0] bg-white pl-[7px]">
        {menus.map((m) => {
          const at = m.indexOf("&");
          return (
            <button key={m}>
              {m.slice(0, at)}
              <u className="underline-offset-2">{m[at + 1]}</u>
              {m.slice(at + 2)}
            </button>
          );
        })}
      </nav>
      <div className="flex h-[31px] shrink-0 border-y border-[#a0a0a0] bg-white">
        <div className="flex items-center border-r border-[#a0a0a0] bg-[#f0f0f0] pr-2 pl-[7px]">
          <Tools list={mainTools} />
        </div>
      </div>
      <div className="flex h-[25px] shrink-0 items-center gap-[5px] border-t border-white pl-2 font-['Liberation_Sans',sans-serif]">
        {userBar.map(([name, width]) => (
          <button key={name} className={clsx("h-5 border border-white border-r-2 border-b-2 border-r-[#696969] border-b-[#696969]", width)}>
            {name}
          </button>
        ))}
      </div>

      <div className="flex min-h-0 flex-1 flex-col border-t-2 border-l-2 border-[#808080]">
        <div className="flex min-h-0 flex-1">
          <main className="relative min-w-0 flex-1 overflow-hidden bg-[#ababab]">
            <TraceWindow />
            <Reading
              title="FFT Rea..." tone="rose" label="Amplitude (Channel A)" value="2.6861 V"
              size="text-[34px]" place="top-[726px] left-0 h-[151px] w-[199px]"
            />
            <Reading
              title="CT Readi..." tone="green" label="THD+N - relative (Channel A RMS)" value="0.02133 %"
              size="text-[25px]" place="top-[728px] left-[201px] h-[152px] w-[200px]"
            />
            <MiniWindow title="Sig..." tone="blue" place="top-[856px] left-[993px]" />
            <MiniWindow title="Ou..." tone="blue" place="top-[857px] left-[1158px]" />
            <MiniWindow title="Ou..." tone="blue" place="top-[861px] left-[1327px]" />
            <MiniWindow title="Co..." tone="green" place="top-[864px] left-[1497px]" hot="Maximize" />
            <MiniWindow tone="rose" place="top-[930px] -left-px" hot="Maximize" />
            <MiniWindow tone="blue" place="top-[930px] left-[160px]" />
            <MiniWindow tone="rose" place="top-[930px] left-[320px]" />
            <MiniWindow tone="green" place="top-[930px] left-[480px]" />
            <MiniWindow tone="rose" place="top-[930px] left-[640px]" />
            <MiniWindow tone="blue" place="top-[930px] left-[800px]" />
            <MiniWindow tone="blue" place="top-[930px] left-[960px]" />
            <MiniWindow tone="red" place="top-[930px] left-[1120px]" hot="Close" />
          </main>
          <div className="flex w-[19px] shrink-0 justify-center border-l border-white bg-[#f0f0f0] pt-[17px] pb-10">
            <div className="w-0.5 bg-[#858585]" />
          </div>
        </div>
        <div className="flex h-[18px] shrink-0 items-center border-t border-white bg-[#f0f0f0] pr-[58px] pl-[25px]">
          <div className="h-0.5 flex-1 bg-[#858585]" />
        </div>
      </div>
      <StatusBar />
      <div className="h-0.5 shrink-0 bg-[#4cc2ff]" />
      <div className="pointer-events-none absolute -top-2 left-0">
        <Pointer />
      </div>
    </div>
  );
}
